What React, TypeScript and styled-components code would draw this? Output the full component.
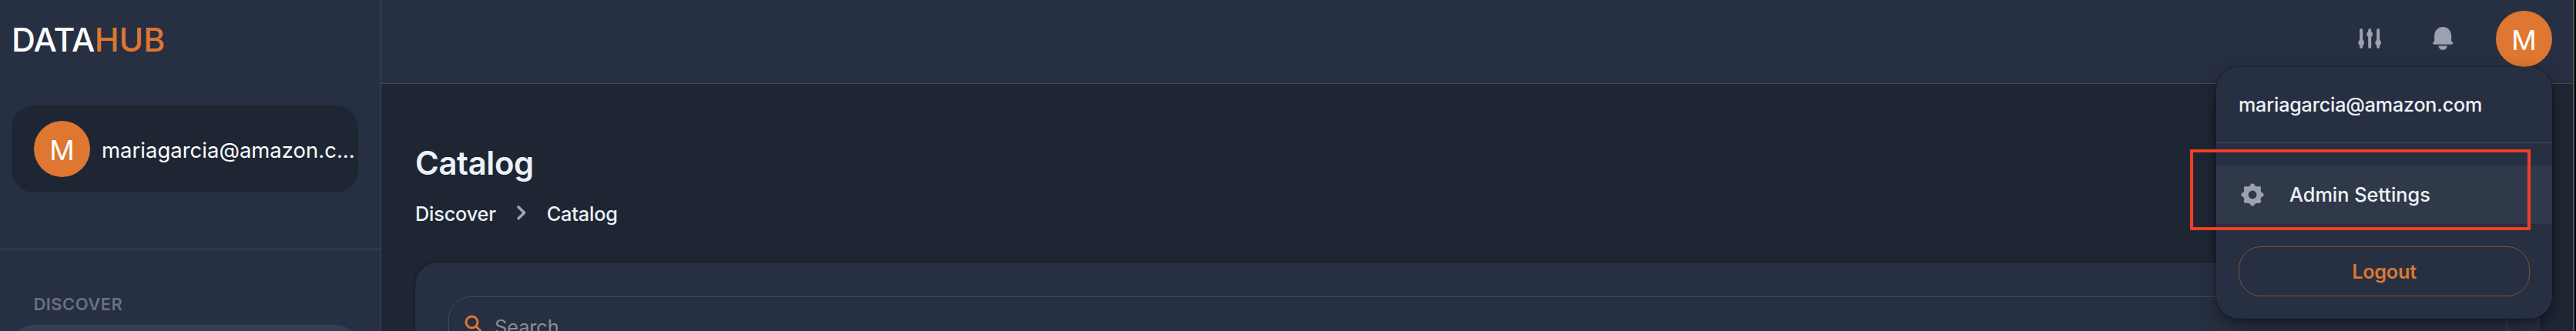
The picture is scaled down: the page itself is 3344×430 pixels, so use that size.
import React from "react";
import styled, { createGlobalStyle } from "styled-components";

const c = {
  bg: "#1e2634",
  panel: "#272f42",
  line: "#3f495a",
  orange: "#dd7731",
  text: "#edf2f7",
  muted: "#9ba1ae",
};

const Global = createGlobalStyle`
  * { box-sizing: border-box; }
  body {
    margin: 0;
    background: ${c.bg};
    color: ${c.text};
    font-family: Inter, "Liberation Sans", sans-serif;
    overflow: hidden;
  }
`;

const Shell = styled.div`
  display: flex;
  width: 3344px;
  height: 430px;
  overflow: hidden;
  position: relative;
`;

const Sidebar = styled.aside`
  width: 495px;
  flex: none;
  background: ${c.panel};
  border-right: 1px solid ${c.line};
  display: flex;
  flex-direction: column;
`;

const SidebarTop = styled.div`
  height: 324px;
  flex: none;
  border-bottom: 1px solid ${c.line};
  padding: 27px 29px 0 15px;
`;

const Logo = styled.div`
  font-size: 42.8px;
  font-weight: 550;
  line-height: 50px;
  color: #fff;
  letter-spacing: -0.7px;
  margin-bottom: 60px;
  white-space: nowrap;
`;

const LogoAccent = styled.span`
  color: ${c.orange};
  letter-spacing: 0;
`;

const UserCard = styled.div`
  height: 113px;
  border-radius: 29px;
  background: ${c.bg};
  display: flex;
  align-items: center;
  padding-left: 29px;
  gap: 15px;
`;

const Avatar = styled.div`
  width: 73px;
  height: 73px;
  flex: none;
  border-radius: 50%;
  background: ${c.orange};
  color: #fff;
  font-size: 36px;
  line-height: 76px;
  text-align: center;
`;

const UserName = styled.span`
  font-size: 27.4px;
  line-height: 40px;
  letter-spacing: 0.05px;
  padding-top: 2px;
  color: #fff;
  white-space: nowrap;
`;

const NavHeading = styled.div`
  font-size: 21.9px;
  font-weight: 600;
  line-height: 30px;
  letter-spacing: 0.5px;
  color: #6a7180;
  padding: 56px 0 0 43.5px;
  margin-bottom: 12px;
`;

const NavItem = styled.div`
  height: 70px;
  flex: none;
  margin: 0 29px 0 15px;
  border-radius: 29px;
  background: #363f50;
`;

const Main = styled.div`
  flex: 1;
  min-width: 0;
  display: flex;
  flex-direction: column;
`;

const TopBar = styled.header`
  height: 109px;
  flex: none;
  background: ${c.panel};
  border-bottom: 1px solid ${c.line};
  display: flex;
  justify-content: flex-end;
  align-items: flex-start;
  padding: 14px 31px 0 0;
`;

const TopIcon = styled.svg<{ $gap: number }>`
  display: block;
  flex: none;
  width: 30px;
  height: 34px;
  margin: 19px ${(p) => p.$gap}px 0 0;
  fill: ${c.muted};
  stroke: none;
`;

const Content = styled.main`
  flex: 1;
  padding: 41px 46px 0 44px;
  display: flex;
  flex-direction: column;
`;

const Title = styled.h1`
  margin: 37px 0 20px;
  font-size: 41.8px;
  font-weight: 600;
  line-height: 50px;
  letter-spacing: -0.35px;
`;

const Breadcrumbs = styled.nav`
  display: flex;
  align-items: center;
  height: 42px;
  font-size: 25.3px;
  font-weight: 450;
  line-height: 42px;
  letter-spacing: -0.2px;
`;

const Crumb = styled.span`
  white-space: nowrap;
`;

const Chevron = styled.svg`
  width: 14px;
  height: 21px;
  margin: 0 26px 4px;
  fill: none;
  stroke: #9aa5b6;
  stroke-width: 3.6;
  stroke-linecap: round;
  stroke-linejoin: round;
`;

const CatalogCard = styled.section`
  margin-top: 42px;
  height: 140px;
  flex: none;
  border-radius: 29px 29px 0 0;
  background: ${c.panel};
  box-shadow: 0 0 2px rgba(0, 0, 0, 0.65), 0 1px 4px rgba(0, 0, 0, 0.25);
  padding: 44px 43px 0;
`;

const SearchBox = styled.div`
  height: 96px;
  border: 1px solid ${c.line};
  border-radius: 29px;
  display: flex;
  align-items: flex-start;
  padding: 23px 0 0 20px;
  gap: 17px;
  font-size: 25.5px;
  line-height: 31px;
  letter-spacing: -0.15px;
  color: #858c99;
`;

const SearchIcon = styled.svg`
  width: 22px;
  height: 22px;
  fill: none;
  stroke: ${c.orange};
  stroke-width: 3;
  stroke-linecap: round;
`;

const WindowEdge = styled.div`
  width: 4px;
  height: 430px;
  position: absolute;
  right: 0;
  top: 0;
  background: #000;
  border-left: 2px solid #4e5462;
`;

const Menu = styled.div`
  position: absolute;
  left: 2877px;
  top: 87px;
  width: 436px;
  height: 327px;
  border-radius: 29px;
  background: ${c.panel};
  box-shadow: 0 0 2px rgba(0, 0, 0, 0.6), 0 8px 22px -3px rgba(0, 0, 0, 0.55);
  display: flex;
  flex-direction: column;
`;

const MenuUser = styled.div`
  height: 99px;
  flex: none;
  border-bottom: 1px solid ${c.line};
  padding: 28px 0 0 29px;
  font-size: 25.1px;
  font-weight: 450;
  line-height: 42px;
  letter-spacing: -0.18px;
`;

const MenuItem = styled.div`
  height: 76px;
  flex: none;
  margin: 29px 0;
  background: #303949;
  display: flex;
  align-items: center;
  padding-left: 32px;
  gap: 33px;
  font-size: 25.3px;
  font-weight: 450;
`;

const MenuLabel = styled.span`
  padding-bottom: 2px;
`;

const GearIcon = styled.svg`
  width: 30px;
  height: 30px;
  fill: ${c.muted};
  flex: none;
`;

const LogoutButton = styled.button`
  margin: 0 29px;
  height: 65px;
  flex: none;
  border: 1px solid #835230;
  border-radius: 29px;
  background: transparent;
  color: ${c.orange};
  font: 560 25.3px/42px Inter, sans-serif;
  letter-spacing: -0.3px;
  padding: 1px 0 0;
`;

const Highlight = styled.div`
  position: absolute;
  left: 2843px;
  top: 194px;
  width: 442px;
  height: 105px;
  border: 4px solid #ee4024;
`;

const Sliders = () => (
  <TopIcon $gap={65} viewBox="0 0 30 34">
    {[
      [4.2, 22.5],
      [15.2, 11.5],
      [26.2, 22.5],
    ].map(([x, y]) => (
      <g key={x}>
        <rect x={x - 2} y="4" width="4" height="26" rx="2" />
        <path d={`M${x - 2} ${y - 3.8}h4l1.7 2.4v2.8l-1.7 2.4h-4l-1.7-2.4v-2.8z`} />
      </g>
    ))}
  </TopIcon>
);

const Bell = () => (
  <TopIcon $gap={54} viewBox="0 0 30 34">
    <path d="M4.2 14C4.2 6.8 8.8 2 15.2 2s11 4.8 11 12v6.3c0 .5 2 1.2 2 2.7 0 1.1-.8 1.7-2 1.7H4.2c-1.2 0-2-.6-2-1.7 0-1.5 2-2.2 2-2.7z" />
    <path d="M9.6 26.4h11.2c0 3-2.4 5.4-5.6 5.4s-5.6-2.4-5.6-5.4z" />
  </TopIcon>
);

const lobes = [0, 45, 90, 135, 180, 225, 270, 315];

const Gear = () => (
  <GearIcon viewBox="-15 -15 30 30">
    <circle r="8.7" fill="none" stroke={c.muted} strokeWidth="6.6" />
    {lobes.map((a) => (
      <path
        key={a}
        transform={`rotate(${a})`}
        d="M-5 -10.2C-3.3 -10.8 -3 -12 -2.5 -13.2C-1.8 -15 1.8 -15 2.5 -13.2C3 -12 3.3 -10.8 5 -10.2L4 -8H-4z"
      />
    ))}
  </GearIcon>
);

export default function App() {
  return (
    <Shell>
      <Global />
      <Sidebar>
        <SidebarTop>
          <Logo>
            DATA<LogoAccent>HUB</LogoAccent>
          </Logo>
          <UserCard>
            <Avatar>M</Avatar>
            <UserName>mariagarcia@amazon.c...</UserName>
          </UserCard>
        </SidebarTop>
        <NavHeading>DISCOVER</NavHeading>
        <NavItem />
      </Sidebar>
      <Main>
        <TopBar>
          <Sliders />
          <Bell />
          <Avatar>M</Avatar>
          <WindowEdge />
        </TopBar>
        <Content>
          <Title>Catalog</Title>
          <Breadcrumbs>
            <Crumb>Discover</Crumb>
            <Chevron viewBox="0 0 14 21">
              <path d="M3 3l7.6 7.4L3 17.8" />
            </Chevron>
            <Crumb>Catalog</Crumb>
          </Breadcrumbs>
          <CatalogCard>
            <SearchBox>
              <SearchIcon viewBox="0 0 22 22">
                <circle cx="9.5" cy="9.5" r="7.5" />
                <path d="M15 15l7 7" />
              </SearchIcon>
              Search
            </SearchBox>
          </CatalogCard>
        </Content>
      </Main>
      <Menu>
        <MenuUser>mariagarcia@amazon.com</MenuUser>
        <MenuItem>
          <Gear />
          <MenuLabel>Admin Settings</MenuLabel>
        </MenuItem>
        <LogoutButton>Logout</LogoutButton>
      </Menu>
      <Highlight />
    </Shell>
  );
}
